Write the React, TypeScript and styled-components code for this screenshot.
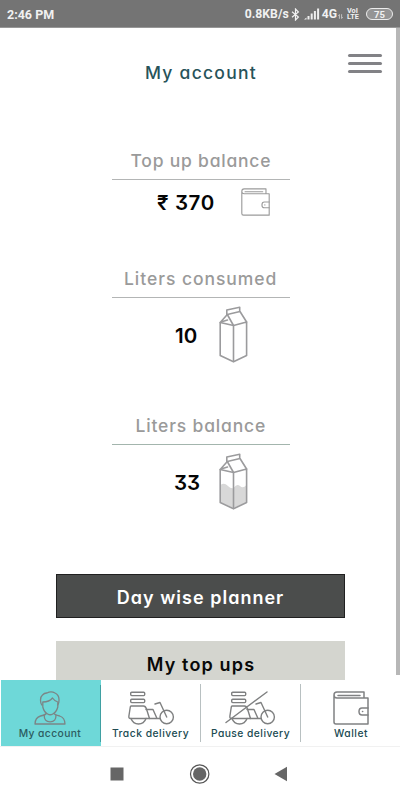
import React from "react";
import styled, { createGlobalStyle } from "styled-components";

const Global = createGlobalStyle`
  * { box-sizing: border-box; }
  body { margin: 0; background: #fff; overflow: hidden; }
  svg { display: block; flex: none; }
`;

const Screen = styled.div`
  width: 400px;
  height: 800px;
  display: flex;
  flex-direction: column;
  background: #fff;
  overflow: hidden;
  font-family: Inter, "Noto Sans", sans-serif;
  font-feature-settings: "cv11", "cv09";
`;

const StatusBar = styled.header`
  flex: none;
  height: 28px;
  display: flex;
  align-items: center;
  justify-content: space-between;
  padding: 1px 7px 0;
  background: #747474;
  border-bottom: 1px solid #979797;
  color: #f1f1f1;
  font: 700 12.5px/27px Roboto, sans-serif;
`;

const StatusIcons = styled.div`
  display: flex;
  align-items: center;
`;

const Reading = styled.span<{ $gap: number }>`
  margin-right: ${(p) => p.$gap}px;
  font-size: 12.2px;
`;

const Volte = styled.span`
  display: flex;
  flex-direction: column;
  width: 13px;
  margin: 0 6px 0 4px;
  font-size: 7.3px;
  line-height: 6px;
`;

const Battery = styled.span`
  display: flex;
  align-items: center;
  justify-content: center;
  width: 27px;
  height: 12px;
  border: 1.5px solid #ececec;
  border-radius: 6px;
  background: #959595;
  font-size: 9.5px;
  line-height: 11px;
  padding-top: 1px;
`;

const Body = styled.main`
  flex: none;
  height: 652px;
  display: flex;
  overflow: hidden;
`;

const Content = styled.div`
  width: 396px;
  display: flex;
  flex-direction: column;
`;

const ScrollThumb = styled.div`
  width: 4px;
  height: 647px;
  background: #b7b7b7;
`;

const TitleBar = styled.div`
  height: 120px;
  flex: none;
  display: grid;
  grid-template-columns: 145px 1fr 34px;
  padding-right: 14px;
`;

const Title = styled.h1`
  grid-column: 2;
  margin: 33px 0 0;
  color: #27535a;
  font-size: 17.5px;
  font-weight: 500;
  line-height: 24px;
  letter-spacing: 1.25px;
`;

const MenuButton = styled.button`
  margin: 26px 0 0;
  padding: 0;
  height: 19px;
  border: 0;
  background: none;
  display: flex;
  flex-direction: column;
  justify-content: space-between;
`;

const MenuLine = styled.span`
  width: 34px;
  height: 3px;
  border-radius: 2px;
  background: #828286;
`;

const Stat = styled.section<{ $height: number }>`
  flex: none;
  width: 178px;
  height: ${(p) => p.$height}px;
  margin-left: 112px;
`;

const StatLabel = styled.h2<{ $indent: number; $spacing: number; $rule?: string }>`
  height: 32px;
  margin: 0;
  padding-left: ${(p) => p.$indent}px;
  border-bottom: 1px solid ${(p) => p.$rule ?? "#b3b5b5"};
  color: #9a9a9a;
  font-size: 17.5px;
  font-weight: 500;
  line-height: 25px;
  letter-spacing: ${(p) => p.$spacing}px;
  white-space: nowrap;
`;

const StatRow = styled.div<{ $indent: number; $height: number }>`
  display: flex;
  align-items: center;
  height: ${(p) => p.$height}px;
  margin-top: 8px;
  padding-left: ${(p) => p.$indent}px;
`;

const Value = styled.strong<{ $width: number; $spacing?: number }>`
  width: ${(p) => p.$width}px;
  padding-top: 2px;
  color: #050505;
  font-size: 20.5px;
  font-weight: 600;
  line-height: 26px;
  letter-spacing: ${(p) => p.$spacing ?? 0}px;
  white-space: nowrap;
`;

const Action = styled.button<{ $dark?: boolean }>`
  flex: none;
  width: 289px;
  height: ${(p) => (p.$dark ? 44 : 46)}px;
  margin: 0 0 ${(p) => (p.$dark ? 22.5 : 0)}px 56px;
  padding: ${(p) => (p.$dark ? "3px 0 0 0" : "2px 0 0 1px")};
  border: ${(p) => (p.$dark ? "1px solid #202020" : "0")};
  background: ${(p) => (p.$dark ? "#4b4d4c" : "#d4d5cf")};
  color: ${(p) => (p.$dark ? "#fff" : "#080808")};
  font-family: inherit;
  font-feature-settings: inherit;
  font-size: 18px;
  font-weight: 600;
  letter-spacing: ${(p) => (p.$dark ? 1.02 : 1.15)}px;
`;

const TabBar = styled.nav`
  flex: none;
  height: 67px;
  display: grid;
  grid-template-columns: 101px 100px 100px 99px;
  border-bottom: 1px solid #f1f1f1;
`;

const Tab = styled.a<{ $active?: boolean }>`
  display: flex;
  flex-direction: column;
  align-items: center;
  padding-top: 11px;
  color: ${(p) => (p.$active ? "#2c5c61" : "#204b52")};
  background: ${(p) =>
    p.$active
      ? "linear-gradient(90deg, #fff 1px, #6ed8d8 1px)"
      : "#fff"};
  border-right: 1px solid transparent;
  border-image: ${(p) =>
      p.$active
        ? "linear-gradient(#6ed8d8 6px, #3fa0a2 6px, #3fa0a2 61px, #6ed8d8 61px)"
        : "linear-gradient(#fff 5px, #b8c0c1 5px, #b8c0c1 61px, #fff 61px)"}
    1;
  &:last-child {
    border-image: none;
    padding-left: 2px;
  }
`;

const TabLabel = styled.span<{ $spacing: number }>`
  margin-top: 2px;
  font-size: 10.3px;
  font-weight: 500;
  line-height: 13px;
  letter-spacing: ${(p) => p.$spacing}px;
  white-space: nowrap;
`;

const SystemNav = styled.footer`
  flex: 1;
  display: flex;
  align-items: center;
  padding: 0 0 0 110px;
`;

const line = { fill: "none", stroke: "#7f8081", strokeLinecap: "round", strokeLinejoin: "round" } as const;

const Wallet = ({ size, height, width = 1.6, color = "#808183" }: { size: number; height: number; width?: number; color?: string }) => (
  <svg width={size} height={height} viewBox="0 0 36 34" preserveAspectRatio="none" {...line} stroke={color} strokeWidth={width}>
    <path d="M31 7V1H4Q1 1 1 4V31Q1 33 3 33H35V7H4Q1 7 1 4M5 4.5H27" />
    <path d="M35 17H29Q26 17 26 20.5T29 24H35M29.5 20.5h.2" />
  </svg>
);

const Carton = ({ filled }: { filled?: boolean }) => (
  <svg width="29" height="57" viewBox="0 0 29 57" {...line} stroke="#9b9b9d" strokeWidth="1.6">
    {filled && (
      <path d="M1.5 32Q5 29 9 33Q12 36 14.5 35Q18 30 21 33Q24 36 27.5 32V49L14.5 55L1.5 49Z" fill="#d8d8d8" stroke="none" />
    )}
    <path d="M1.2 16.5L14.5 19.5L27.6 16V49.5L14.5 55.7L1.2 49.5Z" />
    <path d="M14.5 19.5V55.5M1.2 16.5L8.3 8.5L14.5 19.5M8.3 8.5L21 5.5L27.6 16M7.8 8.5V4L20.7 1.2V5.5M2 16L8.5 14" />
  </svg>
);

const Scooter = ({ paused }: { paused?: boolean }) => (
  <svg width="46" height="34" viewBox={paused ? "1.5 0 46 34" : "2.5 0 46 34"} {...line} strokeWidth="1.4" overflow="visible">
    <rect x="5.2" y="1.2" width="14" height="3.4" rx="1" />
    <rect x="5.2" y="8.2" width="14" height="3.4" rx="1" />
    <path d="M5.5 15H18Q20 15 21 18L24 27.5H5Q3 27.5 3.4 25L4.8 16Q5 15 5.5 15Z" />
    <path d="M20.5 18.5H27.5L31.5 27.5H24M5.5 27.5Q7.5 33 13 33T20.5 27.5M31.5 27.5H34.8" />
    <circle cx="41.2" cy="26" r="6.7" />
    <path d="M29.5 13L34.5 11.5L41.2 26" />
    {paused && <path d="M-.5 31.5L40.5 1" />}
  </svg>
);

const Person = () => (
  <svg width="32" height="34" viewBox="0 0 32 34" {...line} stroke="#7b8586" strokeWidth="1.3">
    <path d="M7.8 14C6 11 6 6 8.5 4Q10.5 1.8 13 2Q17-.2 21 2Q25 4 25 8.5Q25.2 12 23.8 14" />
    <path d="M8.8 11Q15.5 11 18.5 7Q20.5 10 23.8 11V16Q22.5 21 18.8 23Q16.2 24.5 13.6 23Q10 21 8.8 16Z" />
    <path d="M12.3 22.5Q11 24.3 6.5 25Q1.2 26.5 1 33H31Q30.8 26.5 25.7 25Q21.2 24.3 20 22.5" />
    <path d="M10.2 24Q10 30.8 16.1 30.8T22 24" />
  </svg>
);

const Bluetooth = () => (
  <svg width="14" height="13" viewBox="-1 0 14 13" fill="none" stroke="#f1f1f1" strokeWidth="1.2">
    <path d="M1 3.7L7.4 9L4.5 12V1L7.4 4L1 9.3" />
  </svg>
);

const Signal = () => (
  <svg width="18" height="12" viewBox="0 0 18 12" fill="#eee">
    <path d="M0 11.5L2.5 9.5V11.5ZM3.5 8H5.5V11.5H3.5ZM6.7 5.5H8.7V11.5H6.7ZM9.9 3H11.9V11.5H9.9ZM13.1 .5H15.1V11.5H13.1Z" />
  </svg>
);

const DataArrows = () => (
  <svg width="5" height="12" viewBox="0 -6 5 12" fill="none" stroke="#c8c8c8" strokeWidth=".9">
    <path d="M1.4 4.8V.5L.2 1.8M3.6 .2V4.5L4.8 3.2" />
  </svg>
);

const SystemIcons = () => (
  <svg width="180" height="20" viewBox="0 0 180 20" fill="#666">
    <rect x=".5" y="3.5" width="13" height="13" />
    <circle cx="89.7" cy="10" r="6.7" />
    <circle cx="89.7" cy="10" r="9.2" fill="none" stroke="#555" strokeWidth="1.2" />
    <path d="M164.5 10L177 2.8V17.2Z" />
  </svg>
);

export default function App() {
  return (
    <Screen>
      <Global />
      <StatusBar>
        <span>2:46 PM</span>
        <StatusIcons>
          <Reading $gap={1}>0.8KB/s</Reading>
          <Bluetooth />
          <Signal />
          <Reading $gap={1}>4G</Reading>
          <DataArrows />
          <Volte>
            <span>VoI</span>
            <span>LTE</span>
          </Volte>
          <Battery>75</Battery>
        </StatusIcons>
      </StatusBar>
      <Body>
        <Content>
          <TitleBar>
            <Title>My account</Title>
            <MenuButton aria-label="Menu">
              <MenuLine />
              <MenuLine />
              <MenuLine />
            </MenuButton>
          </TitleBar>
          <Stat $height={118}>
            <StatLabel $indent={18.5} $spacing={0.78}>Top up balance</StatLabel>
            <StatRow $indent={45} $height={28}>
              <Value $width={84} $spacing={0.6}>₹ 370</Value>
              <Wallet size={29} height={28} width={1.4} color="#9b9b9b" />
            </StatRow>
          </Stat>
          <Stat $height={147}>
            <StatLabel $indent={12} $spacing={0.95}>Liters consumed</StatLabel>
            <StatRow $indent={63} $height={57}>
              <Value $width={44}>10</Value>
              <Carton />
            </StatRow>
          </Stat>
          <Stat $height={161}>
            <StatLabel $indent={23.5} $spacing={0.83} $rule="#a3b5ad">Liters balance</StatLabel>
            <StatRow $indent={62} $height={57}>
              <Value $width={45}>33</Value>
              <Carton filled />
            </StatRow>
          </Stat>
          <Action $dark>Day wise planner</Action>
          <Action>My top ups</Action>
        </Content>
        <ScrollThumb />
      </Body>
      <TabBar>
        <Tab $active>
          <Person />
          <TabLabel $spacing={0.4}>My account</TabLabel>
        </Tab>
        <Tab>
          <Scooter />
          <TabLabel $spacing={0.5}>Track delivery</TabLabel>
        </Tab>
        <Tab>
          <Scooter paused />
          <TabLabel $spacing={0.45}>Pause delivery</TabLabel>
        </Tab>
        <Tab>
          <Wallet size={36} height={34} width={1.5} />
          <TabLabel $spacing={0.5}>Wallet</TabLabel>
        </Tab>
      </TabBar>
      <SystemNav>
        <SystemIcons />
      </SystemNav>
    </Screen>
  );
}
